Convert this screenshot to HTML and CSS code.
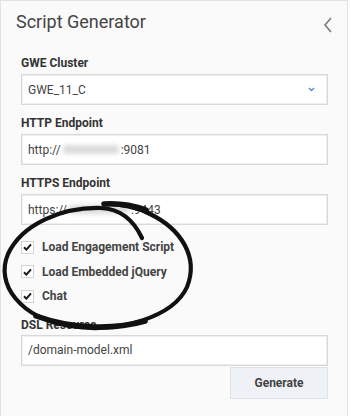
FILE: index.html
```html
<!DOCTYPE html>
<html lang="en">
<head>
  <meta charset="UTF-8">
  <title>Script Generator</title>
  <link rel="stylesheet" href="styles.css">
</head>
<body>
  <div class="panel">
    <div class="panel-header">
      <h1>Script Generator</h1>
      <svg class="collapse" width="10" height="16" viewBox="0 0 10 16">
        <polyline points="8,1 2,8 8,15" fill="none" stroke="#7a7a7a" stroke-width="1.6"/>
      </svg>
    </div>

    <div class="field first">
      <label>GWE Cluster</label>
      <div class="input select">
        <span>GWE_11_C</span>
        <svg width="7" height="5" viewBox="0 0 7 5">
          <polyline points="1,1 3.5,3.5 6,1" fill="none" stroke="#5b8bdc" stroke-width="1.4"/>
        </svg>
      </div>
    </div>

    <div class="field">
      <label>HTTP Endpoint</label>
      <div class="input">http://<span class="blurred host1"></span>:9081</div>
    </div>

    <div class="field">
      <label>HTTPS Endpoint</label>
      <div class="input">https://<span class="blurred host2"></span>:9443</div>
    </div>

    <div class="checks">
      <div class="check">
        <span class="box"><svg width="9" height="8" viewBox="0 0 9 8"><polyline points="1,4.2 3.4,6.6 8,1.4" fill="none" stroke="#1a1a1a" stroke-width="2"/></svg></span>
        Load Engagement Script
      </div>
      <div class="check">
        <span class="box"><svg width="9" height="8" viewBox="0 0 9 8"><polyline points="1,4.2 3.4,6.6 8,1.4" fill="none" stroke="#1a1a1a" stroke-width="2"/></svg></span>
        Load Embedded jQuery
      </div>
      <div class="check">
        <span class="box"><svg width="9" height="8" viewBox="0 0 9 8"><polyline points="1,4.2 3.4,6.6 8,1.4" fill="none" stroke="#1a1a1a" stroke-width="2"/></svg></span>
        Chat
      </div>
    </div>

    <div class="field dsl">
      <label>DSL Resource</label>
      <div class="input">/domain-model.xml</div>
    </div>

    <div class="actions">
      <button class="generate">Generate</button>
    </div>

    <!-- hand drawn marker circle over the checkboxes -->
    <svg class="marker" width="349" height="416" viewBox="0 0 349 416">
      <path d="M142 238 C134 221 121 209 101 208 C62 207 22 224 8 254 C-5 284 20 318 70 326 C120 334 174 316 187 287 C199 257 181 229 150 214 C136 207 121 204 104 204"
            fill="none" stroke="#111" stroke-width="4.2" stroke-linecap="round"/>
      <path d="M104 204 C118 203 132 205 146 210" fill="none" stroke="#111" stroke-width="5.5" stroke-linecap="round"/>
      <path d="M36 316 C70 328 110 331 145 321" fill="none" stroke="#111" stroke-width="5.5" stroke-linecap="round"/>
    </svg>
  </div>
</body>
</html>
```

FILE: styles.css
```css
body {
  margin: 0;
  font-family: Roboto, "Liberation Sans", sans-serif;
  background: #fff;
}

.panel {
  position: relative;
  width: 348px;
  height: 416px;
  box-sizing: border-box;
  background: #fafafa;
  border: 1px solid #e2e2e2;
  border-bottom: none;
  padding: 0 19px 0 20px;
}

.panel-header {
  display: flex;
  justify-content: space-between;
  align-items: center;
  margin-left: -5px;
  padding-top: 10px;
  height: 21px;
}

.panel-header h1 {
  margin: 0;
  font-size: 18px;
  font-weight: 400;
  line-height: 21px;
  color: #444;
}

.collapse {
  margin-right: -5px;
  margin-top: 6px;
}

.field {
  margin-top: 11px;
}

.field.first {
  margin-top: 24px;
}

.field label {
  display: block;
  font-size: 12px;
  font-weight: 700;
  line-height: 14px;
  color: #333;
  margin-bottom: 4px;
}

.input {
  height: 31px;
  box-sizing: border-box;
  background: #fff;
  border: 1px solid #d8d8d8;
  box-shadow: inset 0 0 0 1px #efefef;
  padding: 0 6px;
  display: flex;
  align-items: center;
  font-size: 12px;
  color: #444;
}

.select {
  justify-content: space-between;
  padding-right: 12px;
}

.blurred {
  display: inline-block;
  height: 9px;
  margin: 0 2px;
  background: #dcdcdc;
  border-radius: 3px;
  filter: blur(2px);
}

.host1 {
  width: 56px;
}

.host2 {
  width: 60px;
}

.checks {
  margin-top: 10px;
}

.check {
  display: flex;
  align-items: center;
  height: 24.5px;
  font-size: 12px;
  font-weight: 700;
  color: #444;
}

.box {
  width: 13px;
  height: 13px;
  box-sizing: border-box;
  border: 1px solid #d4d4d4;
  background: #fff;
  margin-right: 8px;
  display: flex;
  align-items: center;
  justify-content: center;
}

.field.dsl {
  margin-top: 9px;
}

.field.dsl label {
  margin-bottom: 3px;
}

.actions {
  display: flex;
  justify-content: flex-end;
  margin-top: 1px;
}

.generate {
  width: 98px;
  height: 32px;
  background: #eef1f5;
  border: 1px solid #dfe3e8;
  font-family: Roboto, "Liberation Sans", sans-serif;
  font-size: 12px;
  font-weight: 700;
  color: #444;
}

.marker {
  position: absolute;
  left: -1px;
  top: -1px;
  pointer-events: none;
}
```
